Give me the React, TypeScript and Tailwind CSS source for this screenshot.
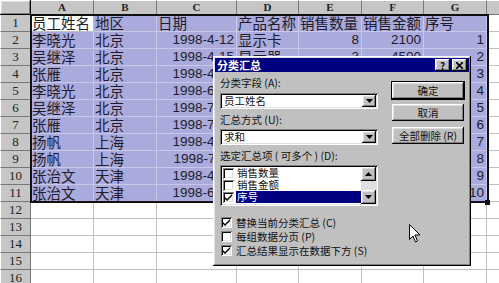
import React from "react";

const colWidths = "grid-cols-[31px_63px_63px_80px_62px_63px_62px_63px_80px]";
const letters = ["A", "B", "C", "D", "E", "F", "G", ""];

const data: string[][] = [
  ["员工姓名", "地区", "日期", "产品名称", "销售数量", "销售金额", "序号"],
  ["李晓光", "北京", "1998-4-12", "显示卡", "8", "2100", "1"],
  ["吴继泽", "北京", "1998-4-15", "显示器", "3", "4500", "2"],
  ["张雁", "北京", "1998-4-23", "硬盘", "5", "4000", "3"],
  ["李晓光", "北京", "1998-6-10", "显示卡", "6", "1500", "4"],
  ["吴继泽", "北京", "1998-7-02", "内存", "4", "1200", "5"],
  ["张雁", "北京", "1998-7-18", "光驱", "2", "1000", "6"],
  ["扬帆", "上海", "1998-4-20", "显示器", "3", "4500", "7"],
  ["扬帆", "上海", "1998-7-11", "硬盘", "2", "1600", "8"],
  ["张治文", "天津", "1998-4-28", "内存", "5", "1500", "9"],
  ["张治文", "天津", "1998-6-16", "显示卡", "4", "1400", "10"],
];

const raised =
  "shadow-[inset_-1px_-1px_0_#000,inset_1px_1px_0_#fff,inset_-2px_-2px_0_#808080,inset_2px_2px_0_#dfdfdf]";
const sunken =
  "shadow-[inset_1px_1px_0_#808080,inset_-1px_-1px_0_#fff,inset_2px_2px_0_#000,inset_-2px_-2px_0_#dfdfdf]";

function Check({ on }: { on: boolean }) {
  return (
    <span className={`w-[11px] h-[11px] bg-white shrink-0 flex items-center justify-center ${sunken}`}>
      {on && (
        <svg width="7" height="7" viewBox="0 0 7 7">
          <path d="M0 3 L2 5 L7 0 L7 2 L2 7 L0 5 Z" fill="#000" />
        </svg>
      )}
    </span>
  );
}

function Arrow({ up }: { up?: boolean }) {
  return (
    <svg width="7" height="4" viewBox="0 0 7 4">
      <path d={up ? "M3.5 0 L7 4 L0 4 Z" : "M0 0 L7 0 L3.5 4 Z"} fill="#000" />
    </svg>
  );
}

function Combo({ text }: { text: string }) {
  return (
    <div className={`h-[16px] bg-white flex items-center pl-[4px] pr-[2px] ${sunken}`}>
      <span className="flex-1 text-[10.5px] leading-[12px]">{text}</span>
      <span className={`w-[14px] h-[12px] bg-[#c0c0c0] flex items-center justify-center ${raised}`}>
        <Arrow />
      </span>
    </div>
  );
}

function Btn({ label, def }: { label: string; def?: boolean }) {
  return (
    <div
      className={`h-[17px] bg-[#c0c0c0] flex items-center justify-center text-[10.5px] leading-[12px] ${raised} ${
        def ? "outline outline-1 outline-black" : ""
      }`}
    >
      {label}
    </div>
  );
}

function Dialog() {
  return (
    <div
      className={`absolute left-[213px] top-[56px] w-[258px] h-[210px] bg-[#c0c0c0] p-[2px] text-[#111] ${raised}`}
    >
      <div className="h-[14px] bg-[#000080] flex items-center justify-between pl-[2px] pr-[2px]">
        <span className="text-white text-[11px] leading-[13px] font-bold">分类汇总</span>
        <div className="flex gap-[2px]">
          <span className={`w-[15px] h-[12px] bg-[#c0c0c0] flex items-center justify-center text-[10px] font-bold leading-[11px] ${raised}`}>
            ?
          </span>
          <span className={`w-[15px] h-[12px] bg-[#c0c0c0] flex items-center justify-center ${raised}`}>
            <svg width="7" height="7" viewBox="0 0 7 7">
              <path d="M0 0 L7 7 M7 0 L0 7" stroke="#000" strokeWidth="1.6" />
            </svg>
          </span>
        </div>
      </div>
      <div className="flex pl-[5px] pt-[4px]">
        <div className="w-[158px] flex flex-col">
          <div className="h-[14px] leading-[14px] text-[10.5px]">分类字段 (A):</div>
          <div className="mt-[3px]">
            <Combo text="员工姓名" />
          </div>
          <div className="mt-[4px] h-[14px] leading-[14px] text-[10.5px]">汇总方式 (U):</div>
          <div className="mt-[2px]">
            <Combo text="求和" />
          </div>
          <div className="mt-[4px] h-[14px] leading-[14px] text-[10.5px]">选定汇总项 ( 可多个 ) (D):</div>
          <div className={`mt-[2px] h-[41px] bg-white flex p-[2px] ${sunken}`}>
            <div className="flex-1 flex flex-col">
              {[
                ["销售数量", false],
                ["销售金额", false],
                ["序号", true],
              ].map(([t, on]) => (
                <div key={t as string} className="h-[12px] flex items-center pl-[1px]">
                  <Check on={on as boolean} />
                  <span
                    className={`ml-[2px] flex-1 h-[12px] leading-[12px] text-[10.5px] pl-[1px] ${
                      on ? "bg-[#000080] text-white" : ""
                    }`}
                  >
                    {t as string}
                  </span>
                </div>
              ))}
            </div>
            <div className="w-[15px] flex flex-col bg-[#e0e0e0]">
              <span className={`h-[14px] bg-[#c0c0c0] flex items-center justify-center ${raised}`}>
                <Arrow up />
              </span>
              <span className="flex-1" />
              <span className={`h-[14px] bg-[#c0c0c0] flex items-center justify-center ${raised}`}>
                <Arrow />
              </span>
            </div>
          </div>
          <div className="mt-[9px] flex flex-col">
            {[
              ["替换当前分类汇总 (C)", true],
              ["每组数据分页 (P)", false],
              ["汇总结果显示在数据下方 (S)", true],
            ].map(([t, on]) => (
              <div key={t as string} className="h-[14px] flex items-center gap-[4px] pl-[1px]">
                <Check on={on as boolean} />
                <span className="text-[10.5px] leading-[13px]">{t as string}</span>
              </div>
            ))}
          </div>
        </div>
        <div className="ml-[14px] w-[72px] flex flex-col">
          <div className="mt-[6px]">
            <Btn label="确定" def />
          </div>
          <div className="mt-[5px]">
            <Btn label="取消" />
          </div>
          <div className="mt-[6px]">
            <Btn label="全部删除 (R)" />
          </div>
        </div>
      </div>
    </div>
  );
}

export default function App() {
  const rows = Array.from({ length: 16 }, (_, i) => i + 1);
  return (
    <div
      className="relative w-[499px] h-[283px] overflow-hidden bg-white"
      style={{ fontFamily: '"Noto Sans CJK SC", "Liberation Sans", sans-serif' }}
    >
      <div className={`grid ${colWidths} grid-rows-[15px_repeat(16,17px)]`}>
        <div className={`bg-[#c6c6c6] ${raised}`} />
        {letters.map((l, i) => (
          <div
            key={i}
            className="bg-[#c6c6c6] border-r border-b border-[#777] border-t border-t-white flex items-center justify-center text-[11px] leading-[13px] font-bold text-[#222]"
            style={{ fontFamily: '"Liberation Serif", serif' }}
          >
            {l}
          </div>
        ))}
        {rows.map((r) => (
          <React.Fragment key={r}>
            <div
              className="bg-[#c6c6c6] border-b border-r border-[#777] border-l border-l-white flex items-center justify-center text-[13px] leading-[16px] text-[#222]"
              style={{ fontFamily: '"Liberation Serif", serif' }}
            >
              {r}
            </div>
            {Array.from({ length: 8 }, (_, c) => {
              const sel = r <= 11 && c < 7;
              const v = sel ? data[r - 1][c] : "";
              const num = /^[\d-]+$/.test(v);
              const active = r === 1 && c === 0;
              return (
                <div
                  key={c}
                  className={`border-r border-b flex items-center px-[1px] leading-[16px] whitespace-nowrap text-[#1d1d2b] ${
                    sel && !active ? "bg-[#aaaadc] border-[#c8c8ea]" : "bg-white border-[#c0c0c0]"
                  } ${num ? "justify-end text-[13.5px] pr-[2px]" : "text-[14.5px]"}`}
                  style={num ? { fontFamily: '"Liberation Sans", sans-serif' } : undefined}
                >
                  {v}
                </div>
              );
            })}
          </React.Fragment>
        ))}
      </div>
      <div className="absolute left-[30px] top-[14px] w-[459px] h-[189px] border-2 border-[#111] pointer-events-none" />
      <div className="absolute left-[485px] top-[200px] w-[5px] h-[5px] bg-[#111]" />
      <Dialog />
      <svg className="absolute left-[409px] top-[224px]" width="12" height="19" viewBox="0 0 12 19">
        <path
          d="M0.5 0.5 L0.5 15.5 L4 12 L6.5 18 L8.5 17 L6 11 L11 11 Z"
          fill="#fff"
          stroke="#000"
          strokeWidth="1"
          strokeLinejoin="miter"
        />
      </svg>
    </div>
  );
}
